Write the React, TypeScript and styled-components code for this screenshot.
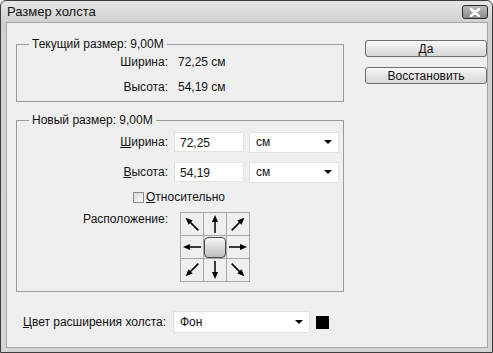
import styled, { createGlobalStyle } from "styled-components";

const GlobalStyle = createGlobalStyle`
  html, body {
    margin: 0;
    padding: 0;
    background: #ffffff;
  }
  body {
    font-family: "Liberation Sans", Arial, sans-serif;
    font-size: 12px;
    color: #111;
  }
`;

const Window = styled.div`
  width: 493px;
  height: 353px;
  box-sizing: border-box;
  border: 1px solid #3c3c3c;
  border-radius: 6px 6px 0 0;
  background: linear-gradient(#e6e6e6, #cfcfcf 22px, #d4d4d4);
  display: flex;
  flex-direction: column;
  overflow: hidden;
`;

const TitleBar = styled.div`
  height: 21px;
  display: flex;
  align-items: center;
  justify-content: space-between;
  padding: 0 4px 0 6px;
  font-size: 13px;
`;

const CloseButton = styled.div`
  width: 24px;
  height: 12px;
  border: 1px solid #2a2a2a;
  border-radius: 3px;
  background: linear-gradient(#bcbcbc, #8a8a8a);
  display: flex;
  align-items: center;
  justify-content: center;
  margin-top: 1px;
`;

const Body = styled.div`
  flex: 1;
  margin: 0 4px 4px 5px;
  border: 1px solid #a8a8a8;
  background: #efefef;
  display: flex;
  padding: 14px 0 0 9px;
  gap: 21px;
`;

const LeftColumn = styled.div`
  width: 330px;
  display: flex;
  flex-direction: column;
`;

const Group = styled.fieldset<{ $height: number; $top?: number }>`
  margin: ${(p) => p.$top ?? 0}px 0 0;
  padding: 0;
  border: 1px solid #9a9a9a;
  height: ${(p) => p.$height}px;
  box-sizing: border-box;
  display: flex;
  flex-direction: column;
`;

const Legend = styled.legend`
  margin-left: 12px;
  padding: 0 3px;
  line-height: 15px;
`;

const InfoList = styled.div`
  display: flex;
  flex-direction: column;
  gap: 5px;
`;

const InfoRow = styled.div`
  display: flex;
  align-items: center;
  height: 20px;
  gap: 10px;
`;

const Label = styled.div<{ $width?: number; $align?: string }>`
  width: ${(p) => p.$width ?? 151}px;
  flex: none;
  text-align: ${(p) => p.$align ?? "right"};
  white-space: nowrap;
  line-height: 14px;
`;

const U = styled.span`
  text-decoration: underline;
`;

const FieldRow = styled.div`
  display: flex;
  align-items: center;
  height: 30px;
  gap: 6px;
  &:first-of-type {
    margin-top: -1px;
  }
`;

const Input = styled.div`
  width: 70px;
  height: 20px;
  box-sizing: border-box;
  background: #fff;
  border: 1px solid #e2e2e2;
  padding: 3px 0 0 5px;
`;

const Select = styled.div<{ $width: number; $height?: number }>`
  width: ${(p) => p.$width}px;
  height: ${(p) => p.$height ?? 21}px;
  flex: none;
  box-sizing: border-box;
  background: #fff;
  border: 1px solid #e2e2e2;
  display: flex;
  align-items: center;
  justify-content: space-between;
  padding: 0 6px 0 6px;
  margin-left: -1px;
`;

const Caret = styled.span`
  width: 0;
  height: 0;
  border-left: 4px solid transparent;
  border-right: 4px solid transparent;
  border-top: 4px solid #000;
`;

const CheckRow = styled.div`
  display: flex;
  align-items: center;
  height: 20px;
  padding-left: 116px;
  gap: 2px;
`;

const Checkbox = styled.span`
  width: 9px;
  height: 9px;
  border: 1px solid #8a8a8a;
  background: linear-gradient(135deg, #d6d6d6, #fafafa);
`;

const AnchorRow = styled.div`
  display: flex;
  align-items: flex-start;
  gap: 12px;
  margin-top: 5px;
`;

const AnchorGrid = styled.div`
  display: grid;
  grid-template-columns: repeat(3, 22px);
  grid-template-rows: repeat(3, 22px);
  gap: 1px;
  background: #a6a6a6;
  border: 1px solid #a6a6a6;
`;

const Cell = styled.div`
  background: #efefef;
  display: flex;
  align-items: center;
  justify-content: center;
`;

const CenterKnob = styled.div`
  width: 22px;
  height: 21px;
  box-sizing: border-box;
  border: 1px solid #4a4a4a;
  border-radius: 4px;
  background: linear-gradient(#f6f6f6, #bcbcbc);
`;

const BottomRow = styled.div`
  display: flex;
  align-items: center;
  margin-top: 19px;
  padding-left: 7px;
`;

const Swatch = styled.span`
  width: 13px;
  height: 13px;
  background: #000;
  margin-left: 6px;
`;

const RightColumn = styled.div`
  display: flex;
  flex-direction: column;
  gap: 10px;
  padding-top: 3px;
`;

const Button = styled.div`
  width: 122px;
  height: 17px;
  box-sizing: border-box;
  border: 1px solid #6e6e6e;
  border-radius: 3px;
  background: linear-gradient(#fafafa, #e6e6e6 50%, #d6d6d6);
  display: flex;
  align-items: center;
  justify-content: center;
`;

const Arrow = ({ angle }: { angle: number }) => (
  <svg width="22" height="22" viewBox="0 0 22 22">
    <g transform={`rotate(${angle} 11 11)`}>
      <line x1="11" y1="20" x2="11" y2="8" stroke="#000" strokeWidth="1.5" />
      <polygon points="11,2 8,9 14,9" fill="#000" />
    </g>
  </svg>
);

const arrows = [-45, 0, 45, -90, null, 90, -135, 180, 135];

export default function App() {
  return (
    <>
      <GlobalStyle />
      <Window>
        <TitleBar>
          <span>Размер холста</span>
          <CloseButton>
            <svg width="12" height="9" viewBox="0 0 12 9">
              <path d="M2 1 L10 8 M10 1 L2 8" stroke="#fff" strokeWidth="2.4" strokeLinecap="round" />
            </svg>
          </CloseButton>
        </TitleBar>
        <Body>
          <LeftColumn>
            <Group $height={65}>
              <Legend>Текущий размер: 9,00M</Legend>
              <InfoList>
                <InfoRow>
                  <Label>Ширина:</Label>
                  <span>72,25 см</span>
                </InfoRow>
                <InfoRow>
                  <Label>Высота:</Label>
                  <span>54,19 см</span>
                </InfoRow>
              </InfoList>
            </Group>
            <Group $height={179} $top={11}>
              <Legend>Новый размер: 9,00M</Legend>
              <FieldRow>
                <Label>
                  <U>Ш</U>ирина:
                </Label>
                <Input>72,25</Input>
                <Select $width={90}>
                  см
                  <Caret />
                </Select>
              </FieldRow>
              <FieldRow>
                <Label>
                  <U>В</U>ысота:
                </Label>
                <Input>54,19</Input>
                <Select $width={90}>
                  см
                  <Caret />
                </Select>
              </FieldRow>
              <CheckRow>
                <Checkbox />
                <span>
                  <U>О</U>тносительно
                </span>
              </CheckRow>
              <AnchorRow>
                <Label>Расположение:</Label>
                <AnchorGrid>
                  {arrows.map((a, i) => (
                    <Cell key={i}>{a === null ? <CenterKnob /> : <Arrow angle={a} />}</Cell>
                  ))}
                </AnchorGrid>
              </AnchorRow>
            </Group>
            <BottomRow>
              <Label $align="left">
                <U>Ц</U>вет расширения холста:
              </Label>
              <Select $width={137} $height={22}>
                Фон
                <Caret />
              </Select>
              <Swatch />
            </BottomRow>
          </LeftColumn>
          <RightColumn>
            <Button>Да</Button>
            <Button>Восстановить</Button>
          </RightColumn>
        </Body>
      </Window>
    </>
  );
}
